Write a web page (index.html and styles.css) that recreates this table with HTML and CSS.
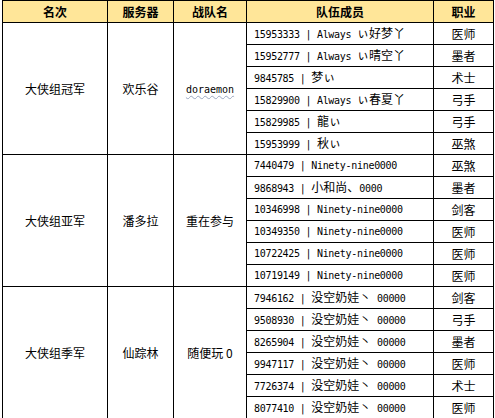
FILE: index.html
```html
<!DOCTYPE html>
<html lang="zh">
<head>
<meta charset="utf-8">
<title>大侠组排名</title>
<link rel="stylesheet" href="styles.css">
</head>
<body>
<table class="rank">
  <colgroup>
    <col class="c-rank">
    <col class="c-server">
    <col class="c-team">
    <col class="c-members">
    <col class="c-job">
  </colgroup>
  <thead>
    <tr><th class="h-rank">名次</th><th class="h-server">服务器</th><th class="h-team">战队名</th><th class="h-members">队伍成员</th><th class="h-job">职业</th></tr>
  </thead>
  <tbody>
    <tr>
      <td class="mid" rowspan="6">大侠组冠军</td>
      <td class="mid" rowspan="6">欢乐谷</td>
      <td class="mid" rowspan="6"><span class="mono wavy">doraemon</span></td>
      <td class="mem">15953333 | Always <span class="cjk">ぃ好梦丫</span></td>
      <td class="job">医师</td>
    </tr>
    <tr><td class="mem">15952777 | Always <span class="cjk">ぃ晴空丫</span></td><td class="job">墨者</td></tr>
    <tr><td class="mem">9845785 | <span class="cjk">梦ぃ</span></td><td class="job">术士</td></tr>
    <tr><td class="mem">15829900 | Always <span class="cjk">ぃ春夏丫</span></td><td class="job">弓手</td></tr>
    <tr><td class="mem">15829985 | <span class="cjk">龍ぃ</span></td><td class="job">弓手</td></tr>
    <tr><td class="mem">15953999 | <span class="cjk">秋ぃ</span></td><td class="job">巫煞</td></tr>
    <tr>
      <td class="mid" rowspan="6">大侠组亚军</td>
      <td class="mid" rowspan="6">潘多拉</td>
      <td class="mid" rowspan="6">重在参与</td>
      <td class="mem">7440479 | Ninety-nine0000</td>
      <td class="job">巫煞</td>
    </tr>
    <tr><td class="mem">9868943 | <span class="cjk">小和尚、</span>0000</td><td class="job">墨者</td></tr>
    <tr><td class="mem">10346998 | Ninety-nine0000</td><td class="job">剑客</td></tr>
    <tr><td class="mem">10349350 | Ninety-nine0000</td><td class="job">医师</td></tr>
    <tr><td class="mem">10722425 | Ninety-nine0000</td><td class="job">医师</td></tr>
    <tr><td class="mem">10719149 | Ninety-nine0000</td><td class="job">医师</td></tr>
    <tr>
      <td class="mid" rowspan="6">大侠组季军</td>
      <td class="mid" rowspan="6">仙踪林</td>
      <td class="mid" rowspan="6">随便玩 0</td>
      <td class="mem">7946162 | <span class="cjk">没空奶娃丶</span> 00000</td>
      <td class="job">剑客</td>
    </tr>
    <tr><td class="mem">9508930 | <span class="cjk">没空奶娃丶</span> 00000</td><td class="job">弓手</td></tr>
    <tr><td class="mem">8265904 | <span class="cjk">没空奶娃丶</span> 00000</td><td class="job">墨者</td></tr>
    <tr><td class="mem">9947117 | <span class="cjk">没空奶娃丶</span> 00000</td><td class="job">医师</td></tr>
    <tr><td class="mem">7726374 | <span class="cjk">没空奶娃丶</span> 00000</td><td class="job">术士</td></tr>
    <tr><td class="mem">8077410 | <span class="cjk">没空奶娃丶</span> 00000</td><td class="job">医师</td></tr>
  </tbody>
</table>
</body>
</html>
```

FILE: styles.css
```css
html, body {
  margin: 0;
  padding: 0;
  background: #ffffff;
}

body {
  padding-left: 2px;
  font-family: "Noto Sans CJK SC", "DejaVu Sans", sans-serif;
  color: #000000;
}

.rank {
  border-collapse: collapse;
  table-layout: fixed;
  width: 491px;
}

.rank .c-rank, .rank .h-rank { width: 105px; }
.rank .c-server, .rank .h-server { width: 66px; }
.rank .c-team, .rank .h-team { width: 73px; }
.rank .c-members, .rank .h-members { width: 187px; }
.rank .c-job, .rank .h-job { width: 60px; }

.rank th,
.rank td {
  border: 1px solid #000000;
  padding: 0;
  height: 21px;
  line-height: 14px;
  white-space: nowrap;
  overflow: hidden;
}

.rank th {
  background: #ffe699;
  font-size: 12px;
  font-weight: 700;
  text-align: center;
}

.rank td {
  font-size: 12px;
}

.rank td.mid {
  text-align: center;
  vertical-align: middle;
}

.rank td.mem {
  font-family: "DejaVu Sans Mono", "Noto Sans CJK SC", monospace;
  font-size: 10px;
  letter-spacing: -0.3px;
  padding-left: 7px;
  text-align: left;
}

.rank .cjk {
  font-family: "Noto Sans CJK SC", sans-serif;
  font-size: 12px;
  letter-spacing: 0;
}

.rank td.job {
  text-align: center;
}

.rank .mono {
  font-family: "DejaVu Sans Mono", monospace;
  font-size: 10px;
}

.rank .wavy {
  text-decoration: underline wavy #9aa7c0;
  text-decoration-thickness: 1px;
  text-underline-offset: 2px;
}
```
